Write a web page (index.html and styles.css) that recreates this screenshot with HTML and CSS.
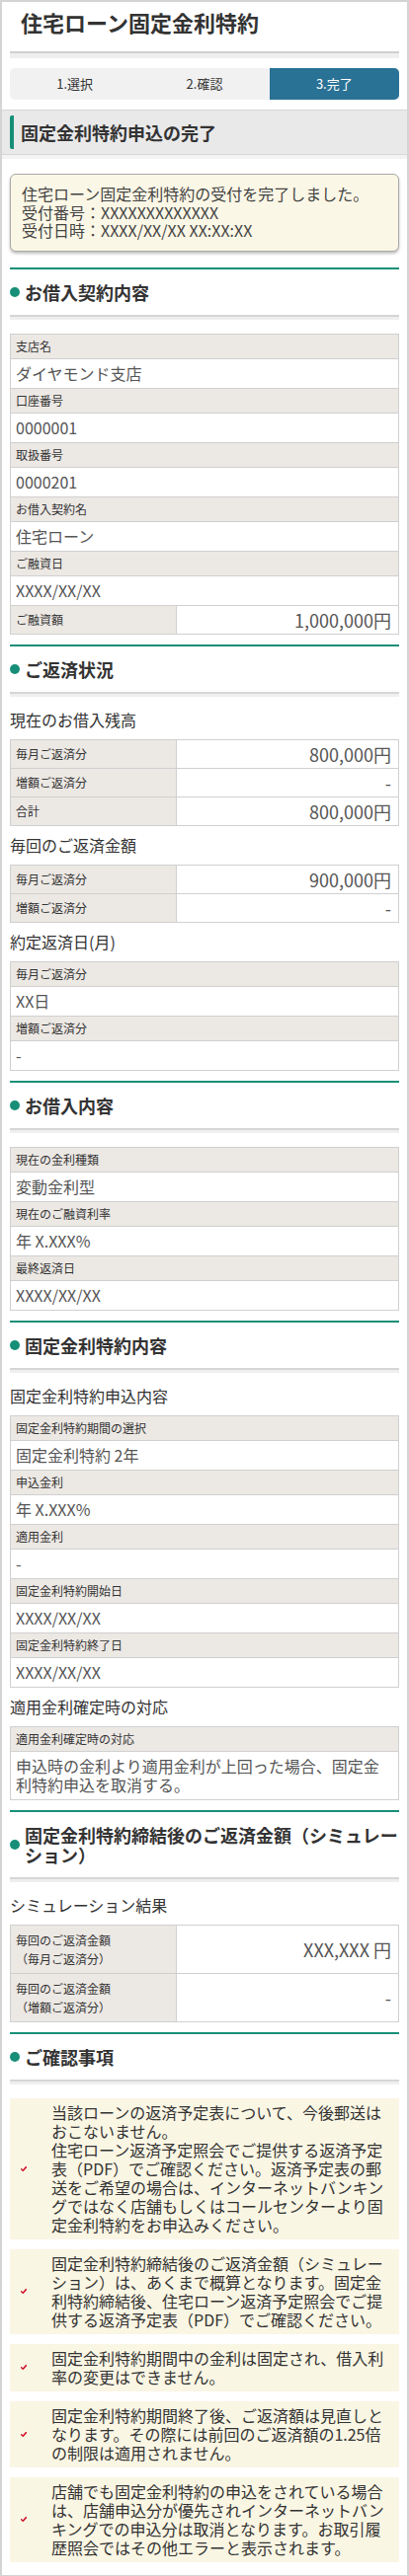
FILE: index.html
```html
<!DOCTYPE html>
<html lang="ja">
<head>
<meta charset="utf-8">
<title>住宅ローン固定金利特約</title>
<link rel="stylesheet" href="styles.css">
</head>
<body>
<div class="page">
  <header class="title-bar"><h1>住宅ローン固定金利特約</h1></header>
  <ol class="steps">
    <li>1.選択</li>
    <li>2.確認</li>
    <li class="active">3.完了</li>
  </ol>
  <div class="band"><h2>固定金利特約申込の完了</h2></div>
  <main class="content">
    <div class="info">
      <p>住宅ローン固定金利特約の受付を完了しました。</p>
      <p>受付番号：XXXXXXXXXXXXX</p>
      <p>受付日時：XXXX/XX/XX XX:XX:XX</p>
    </div>

    <h3 class="sec-head"><span class="dot"></span><span class="sec-text">お借入契約内容</span></h3>
    <div class="kv">
      <div class="lbl">支店名</div>
      <div class="val">ダイヤモンド支店</div>
      <div class="lbl">口座番号</div>
      <div class="val">0000001</div>
      <div class="lbl">取扱番号</div>
      <div class="val">0000201</div>
      <div class="lbl">お借入契約名</div>
      <div class="val">住宅ローン</div>
      <div class="lbl">ご融資日</div>
      <div class="val">XXXX/XX/XX</div>
      <div class="row"><div class="lbl">ご融資額</div><div class="num">1,000,000円</div></div>
    </div>

    <h3 class="sec-head"><span class="dot"></span><span class="sec-text">ご返済状況</span></h3>
    <p class="sub">現在のお借入残高</p>
    <div class="kv">
      <div class="row"><div class="lbl">毎月ご返済分</div><div class="num">800,000円</div></div>
      <div class="row"><div class="lbl">増額ご返済分</div><div class="num">-</div></div>
      <div class="row"><div class="lbl">合計</div><div class="num">800,000円</div></div>
    </div>
    <p class="sub">毎回のご返済金額</p>
    <div class="kv">
      <div class="row"><div class="lbl">毎月ご返済分</div><div class="num">900,000円</div></div>
      <div class="row"><div class="lbl">増額ご返済分</div><div class="num">-</div></div>
    </div>
    <p class="sub">約定返済日(月)</p>
    <div class="kv">
      <div class="lbl">毎月ご返済分</div>
      <div class="val">XX日</div>
      <div class="lbl">増額ご返済分</div>
      <div class="val">-</div>
    </div>

    <h3 class="sec-head"><span class="dot"></span><span class="sec-text">お借入内容</span></h3>
    <div class="kv">
      <div class="lbl">現在の金利種類</div>
      <div class="val">変動金利型</div>
      <div class="lbl">現在のご融資利率</div>
      <div class="val">年 X.XXX%</div>
      <div class="lbl">最終返済日</div>
      <div class="val">XXXX/XX/XX</div>
    </div>

    <h3 class="sec-head"><span class="dot"></span><span class="sec-text">固定金利特約内容</span></h3>
    <p class="sub">固定金利特約申込内容</p>
    <div class="kv">
      <div class="lbl">固定金利特約期間の選択</div>
      <div class="val">固定金利特約 2年</div>
      <div class="lbl">申込金利</div>
      <div class="val">年 X.XXX%</div>
      <div class="lbl">適用金利</div>
      <div class="val">-</div>
      <div class="lbl">固定金利特約開始日</div>
      <div class="val">XXXX/XX/XX</div>
      <div class="lbl">固定金利特約終了日</div>
      <div class="val">XXXX/XX/XX</div>
    </div>
    <p class="sub">適用金利確定時の対応</p>
    <div class="kv">
      <div class="lbl">適用金利確定時の対応</div>
      <div class="val">申込時の金利より適用金利が上回った場合、固定金利特約申込を取消する。</div>
    </div>

    <h3 class="sec-head"><span class="dot"></span><span class="sec-text">固定金利特約締結後のご返済金額（シミュレー<br>ション）</span></h3>
    <p class="sub">シミュレーション結果</p>
    <div class="kv">
      <div class="row tall"><div class="lbl">毎回のご返済金額<br>（毎月ご返済分）</div><div class="num">XXX,XXX 円</div></div>
      <div class="row tall"><div class="lbl">毎回のご返済金額<br>（増額ご返済分）</div><div class="num">-</div></div>
    </div>

    <h3 class="sec-head"><span class="dot"></span><span class="sec-text">ご確認事項</span></h3>
    <ul class="notes">
      <li><svg class="check" viewBox="0 0 6 5" width="6" height="5"><path d="M0.6 2.8 L2.3 4.3 L5.5 0.6"/></svg><p>当該ローンの返済予定表について、今後郵送はおこないません。<br>住宅ローン返済予定照会でご提供する返済予定表（PDF）でご確認ください。返済予定表の郵送をご希望の場合は、インターネットバンキングではなく店舗もしくはコールセンターより固定金利特約をお申込みください。</p></li>
      <li><svg class="check" viewBox="0 0 6 5" width="6" height="5"><path d="M0.6 2.8 L2.3 4.3 L5.5 0.6"/></svg><p>固定金利特約締結後のご返済金額（シミュレーション）は、あくまで概算となります。固定金利特約締結後、住宅ローン返済予定照会でご提供する返済予定表（PDF）でご確認ください。</p></li>
      <li><svg class="check" viewBox="0 0 6 5" width="6" height="5"><path d="M0.6 2.8 L2.3 4.3 L5.5 0.6"/></svg><p>固定金利特約期間中の金利は固定され、借入利率の変更はできません。</p></li>
      <li><svg class="check" viewBox="0 0 6 5" width="6" height="5"><path d="M0.6 2.8 L2.3 4.3 L5.5 0.6"/></svg><p>固定金利特約期間終了後、ご返済額は見直しとなります。その際には前回のご返済額の1.25倍の制限は適用されません。</p></li>
      <li><svg class="check" viewBox="0 0 6 5" width="6" height="5"><path d="M0.6 2.8 L2.3 4.3 L5.5 0.6"/></svg><p>店舗でも固定金利特約の申込をされている場合は、店舗申込分が優先されインターネットバンキングでの申込分は取消となります。お取引履歴照会ではその他エラーと表示されます。</p></li>
    </ul>
  </main>
</div>
</body>
</html>
```

FILE: styles.css
```css
* { box-sizing: border-box; }
html, body { margin: 0; padding: 0; background: #fff; }
body {
  font-family: "Noto Sans CJK JP", "Noto Sans", sans-serif;
  color: #333;
}
p { margin: 0; }

.page {
  border: 2px solid #d4d4d4;
  padding-bottom: 13px;
}

.title-bar {
  height: 52px;
  margin: 0 8px;
  padding: 5px 11px 0;
  border-bottom: 2px solid #cfcfcf;
  box-shadow: 0 5px 0 #efefef;
}
.title-bar h1 {
  margin: 0;
  font-size: 22px;
  line-height: 30px;
  font-weight: 700;
  color: #333;
}

.steps {
  list-style: none;
  margin: 15px 8px 0;
  padding: 0;
  height: 32px;
  display: grid;
  grid-template-columns: 1fr 1fr 1fr;
  background: #f1f1f1;
  border-radius: 5px;
  overflow: hidden;
}
.steps li {
  text-align: center;
  font-size: 13px;
  line-height: 32px;
  color: #333;
}
.steps li.active {
  background: #2a7295;
  color: #fff;
}

.band {
  margin-top: 10px;
  padding: 5px 8px;
  background: #e9e9e9;
  border-top: 1px solid #d6d6d6;
  border-bottom: 1px solid #d6d6d6;
  box-shadow: 0 4px 0 #f3f3f3;
}
.band h2 {
  margin: 0;
  border-left: 4px solid #178f78;
  border-radius: 2px;
  padding-left: 7px;
  font-size: 18px;
  line-height: 34px;
  font-weight: 700;
  color: #333;
}

.content { margin: 0 8px; }

.info {
  margin-top: 19px;
  padding: 10px 11px 11px;
  background: #fbf7e6;
  border: 1px solid #a9a9a9;
  border-radius: 6px;
  box-shadow: 0 2px 3px rgba(0,0,0,0.25);
  font-size: 16px;
  line-height: 18.5px;
  color: #444;
}

.sec-head {
  margin: 10px 0 0;
  padding: 13px 0;
  display: flex;
  align-items: center;
  gap: 5px;
  border-top: 2px solid #178f78;
  border-bottom: 2px solid #d6d6d6;
  box-shadow: 0 3px 0 #efefef;
  font-size: 18px;
  line-height: 20px;
  font-weight: 700;
  color: #333;
}
.info + .sec-head { margin-top: 16px; }
.dot {
  flex: none;
  width: 10px;
  height: 10px;
  border-radius: 50%;
  background: #178f78;
}
.sec-text { margin-right: -6px; }

.sub {
  margin: 7px 0 8px;
  font-size: 16px;
  line-height: 24px;
  color: #333;
}
.sec-head + .sub { margin-top: 14px; }
.sec-head + .kv { margin-top: 17px; }

.kv {
  border: 1px solid #d0d0d0;
}
.kv > * { border-bottom: 1px solid #d0d0d0; }
.kv > :last-child { border-bottom: none; }

.lbl {
  padding: 5px;
  background: #ece8e4;
  font-size: 12px;
  line-height: 14px;
  color: #333;
}
.val {
  padding: 5px;
  font-size: 16px;
  line-height: 19px;
  color: #555;
}

.row {
  display: grid;
  grid-template-columns: 168px 1fr;
}
.row .lbl {
  border-right: 1px solid #d0d0d0;
  line-height: 18px;
}
.row.tall .lbl { line-height: 19px; }
.num {
  padding: 4px 7px;
  font-size: 18px;
  line-height: 20px;
  color: #555;
  text-align: right;
  display: flex;
  align-items: center;
  justify-content: flex-end;
}

.notes {
  list-style: none;
  margin: 17px 0 0;
  padding: 0;
}
.notes li {
  display: flex;
  align-items: center;
  padding: 5px 10px 5px 11px;
  background: #faf6e4;
  font-size: 16px;
  line-height: 19px;
  color: #333;
}
.notes li + li { margin-top: 10px; }
.check {
  flex: none;
  margin-right: 25px;
  fill: none;
  stroke: #d0112b;
  stroke-width: 1.5;
  stroke-linecap: round;
  stroke-linejoin: round;
}
```
